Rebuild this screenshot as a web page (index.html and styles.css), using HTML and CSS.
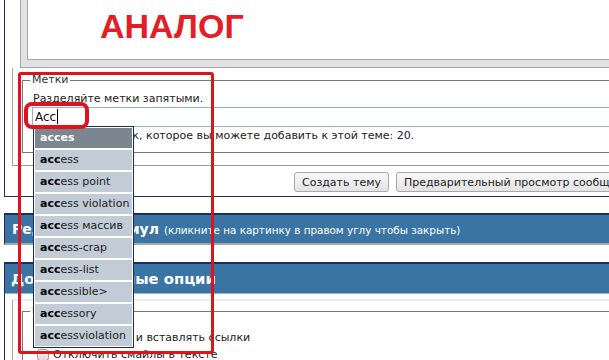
FILE: index.html
```html
<!DOCTYPE html>
<html lang="ru">
<head>
    <meta charset="UTF-8">
    <meta name="viewport" content="width=device-width, initial-scale=1.0">
    <title>Метки</title>
    <link rel="stylesheet" href="styles.css">
</head>
<body>
    <div class="page">
        <div class="panel panel-top">
            <div class="editor">
                <div class="textarea"></div>
            </div>
            <div class="tags">
                <fieldset>
                    <legend>Метки</legend>
                    <div class="hint hint-top">Разделяйте метки запятыми.</div>
                    <div class="tag-input">Acc<span class="caret"></span></div>
                    <div class="hint hint-limit">Количество меток, которое вы можете добавить к этой теме: 20.</div>
                </fieldset>
            </div>
            <div class="buttons">
                <button>Создать тему</button>
                <button>Предварительный просмотр сообщения</button>
            </div>
        </div>

        <div class="bar bar-formula">Редактор формул <span>(кликните на картинку в правом углу чтобы закрыть)</span></div>

        <div class="panel panel-open">
            <div class="bar bar-options">Дополнительные опции</div>
            <div class="options">
                <fieldset>
                    <legend>Разное</legend>
                    <label class="row"><span class="cb"></span>Распознавать и вставлять ссылки</label>
                    <label class="row"><span class="cb"></span>Отключить смайлы в тексте</label>
                </fieldset>
            </div>
        </div>

        <ul class="suggest">
            <li class="active"><b>acces</b></li>
            <li><b>acc</b>ess</li>
            <li><b>acc</b>ess point</li>
            <li><b>acc</b>ess violation</li>
            <li><b>acc</b>ess массив</li>
            <li><b>acc</b>ess-crap</li>
            <li><b>acc</b>ess-list</li>
            <li><b>acc</b>essible&gt;</li>
            <li><b>acc</b>essory</li>
            <li><b>acc</b>essviolation</li>
        </ul>

        <div class="note">АНАЛОГ</div>
        <div class="mark mark-big"></div>
        <div class="mark mark-input"></div>
    </div>
</body>
</html>
```

FILE: styles.css
```css
html, body {
    margin: 0;
    overflow: hidden;
    background: #fff;
}
body {
    font-family: "DejaVu Sans", Verdana, sans-serif;
    font-size: 11px;
    color: #222;
}
.page {
    position: relative;
    width: 1000px;
    height: 360px;
}

.panel {
    margin-left: 4px;
    border-left: 1px solid #1f2c62;
}
.panel-top {
    border-bottom: 1px solid #1f2c62;
    padding-bottom: 4px;
}

.editor {
    margin-left: 15px;
    border-left: 1px solid #a3a3a3;
    border-bottom: 1px solid #a3a3a3;
    background: #e2e2e4;
    padding: 0 0 7px 6px;
}
.textarea {
    height: 59px;
    background: #fff;
    border-left: 1px solid #a8a8a8;
    border-bottom: 1px solid #a8a8a8;
}

.tags {
    margin-left: 7px;
    border-left: 1px solid #a7a7a7;
    border-bottom: 1px solid #9a9a9a;
    padding: 5px 0 12px 9px;
}
fieldset {
    margin: 0;
    padding: 0 0 9px 10px;
    border: 1px solid #767676;
    min-width: 0;
}
legend {
    margin-left: -3px;
    padding: 0 2px;
    line-height: 14px;
    color: #333;
}
.hint {
    line-height: 14px;
    color: #222;
}
.hint-top {
    margin-top: 5px;
}
.hint-limit {
    margin-top: 2px;
}
.tag-input {
    margin: 1px 0 0 -1px;
    height: 18px;
    line-height: 18px;
    border: 1px solid #8eaedb;
    padding-left: 2px;
    font-size: 12px;
    color: #111;
}
.caret {
    display: inline-block;
    width: 1px;
    height: 15px;
    margin-left: 1px;
    background: #000;
    vertical-align: -3px;
}

.buttons {
    display: flex;
    gap: 7px;
    padding: 6px 0 0 289px;
}
button {
    height: 20px;
    padding: 0 7px;
    font-family: "DejaVu Sans", Verdana, sans-serif;
    font-size: 11px;
    color: #222;
    border: 1px solid #a8a8a8;
    border-radius: 3px;
    background: linear-gradient(#f8f8f8, #e3e3e3);
}

.bar {
    height: 29px;
    line-height: 29px;
    padding-left: 6px;
    background: #3974a3;
    border-top: 2px solid #1f2c62;
    border-bottom: 1px solid #9db3c6;
    color: #fff;
    font-size: 14px;
    font-weight: bold;
    white-space: nowrap;
}
.bar-formula {
    margin: 16px 0 0 4px;
    height: 28px;
    line-height: 28px;
    padding-left: 7px;
    border-left: 1px solid #1f2c62;
    border-bottom: 2px solid #a7a7a7;
}
.bar-options {
    font-size: 14.8px;
}
.bar span {
    font-size: 10.4px;
    font-weight: normal;
}
.panel-open {
    margin-top: 17px;
}
.options {
    margin: 5px 0 0 7px;
    height: 80px;
    border-top: 2px solid #ececec;
    border-left: 1px solid #a7a7a7;
    padding: 3px 0 0 9px;
}
.options fieldset {
    padding-top: 11px;
}
.row {
    display: flex;
    align-items: center;
    gap: 4px;
    height: 17px;
    margin-left: 4px;
    color: #222;
}
.cb {
    width: 10px;
    height: 10px;
    border: 1px solid #9c9c9c;
    border-radius: 3px;
    background: linear-gradient(#fdfdfd, #d9d9d9);
}

.suggest {
    position: absolute;
    left: 33px;
    top: 126px;
    width: 99px;
    margin: 0;
    padding: 0;
    list-style: none;
    border: 1px solid #1d295a;
    background: #fff;
}
.suggest li {
    height: 20px;
    line-height: 20px;
    padding-left: 5px;
    border: 1px solid #fff;
    background: #c1ccd6;
    color: #222;
    white-space: nowrap;
    overflow: hidden;
}
.suggest b {
    color: #000;
}
.suggest li.active {
    background: #7b8690;
}
.suggest li.active b {
    color: #fff;
}

.note {
    position: absolute;
    left: 100px;
    top: 9px;
    font-family: "Liberation Sans", Arial, sans-serif;
    font-size: 34px;
    line-height: 34px;
    font-weight: bold;
    color: #e41e26;
}
.mark {
    position: absolute;
    border: 3px solid #e0121c;
}
.mark-big {
    left: 18px;
    top: 72px;
    width: 190px;
    height: 276px;
    border-radius: 3px;
}
.mark-input {
    left: 24px;
    top: 102px;
    width: 57px;
    height: 19px;
    border-width: 4px;
    border-radius: 8px;
}
```
